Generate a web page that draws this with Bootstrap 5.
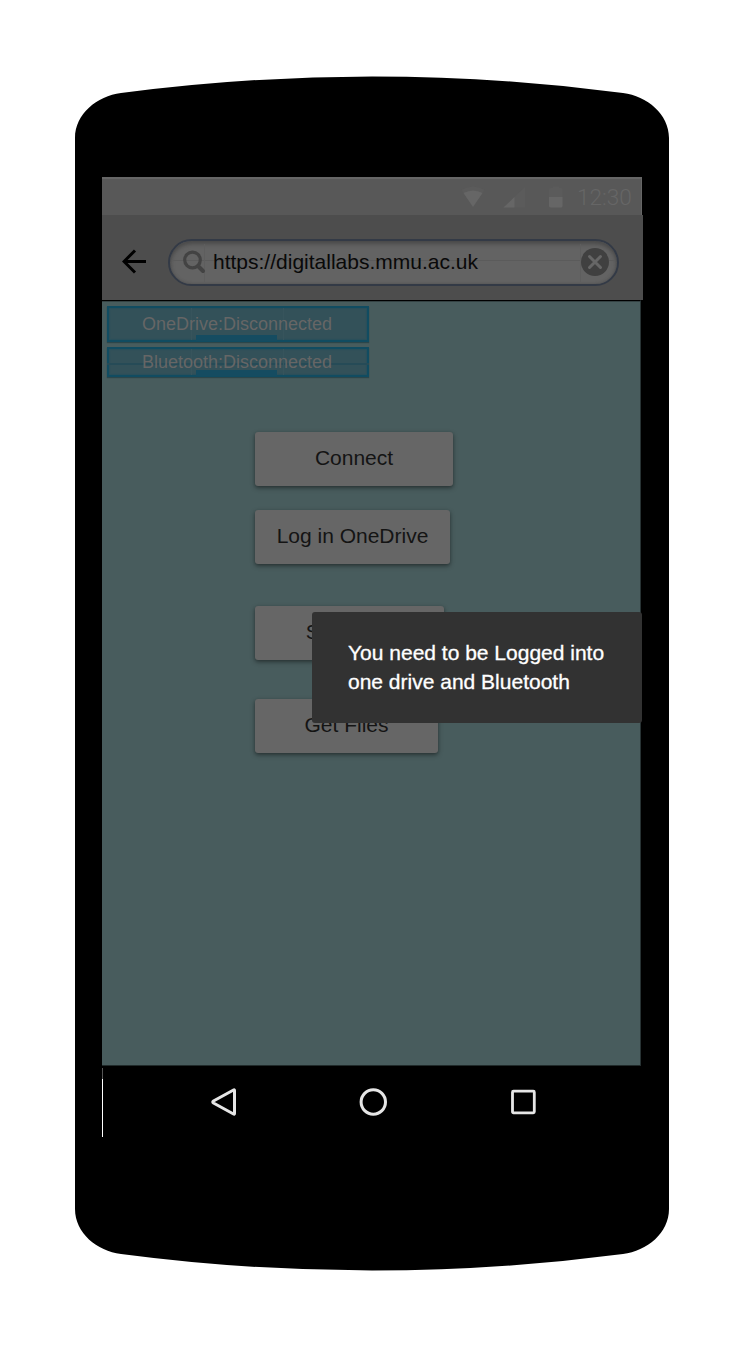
<!DOCTYPE html>
<html lang="en">
<head>
<meta charset="utf-8">
<meta name="viewport" content="width=device-width, initial-scale=1">
<title>Digital Labs</title>
<link href="https://cdn.jsdelivr.net/npm/bootstrap@5.3.0/dist/css/bootstrap.min.css" rel="stylesheet">
<style>
body{background:#fff;font-family:"Liberation Sans",Arial,sans-serif;overflow:hidden}
.phone{width:594px;height:1195px;margin:76px 0 0 75px;padding:101px 26px 0 27px}
.phone-shell{inset:0;z-index:-1}
.status-strip{width:540px;height:38px;background:#585858;border-top:2px solid #666;border-right:1px solid #666;padding-right:10px;color:#666}
.clock{font:300 22.6px/30px Roboto,sans-serif;width:54px;margin-left:11px;padding-top:4px}
.app-bar{width:541px;height:85px;background:#4d4d4d;padding:24px 24px 0 20px}
.back-arrow{margin:10px 21px 0 0}
.search{width:451px;height:47px;border:2px solid #333a46;border-radius:24px;background:#636363;box-shadow:inset 0 3px 4px #4a4a4a,inset 0 0 3px #505050;color:#090909;padding:0 8px 2px 12px}
.search-text{font-size:21px;line-height:41px;margin-left:7px}
.cross-v{top:3px;bottom:2px;width:1px;background:#5e5e5e}
.cross-h{left:2px;right:2px;top:19px;height:1px;background:#5b5b5b}
.page-area{width:539px;height:766px;background:#485c5d;border-top:1px solid #000;border-right:1px solid #283334;border-bottom:1px solid #202a2a;box-shadow:inset 0 1px #344243;padding:5px 0 0 5px}
.state-chip{width:262px;border:2px solid #114c61;background:#335159;color:#666;font-size:18px;box-shadow:0 1px 1px #2b464b,inset 0 0 2px #164f61;padding-right:2px}
.state-chip::after{content:"";position:absolute;left:87px;width:81px;bottom:-1px;height:6px;background:#154c61}
.chip-a{height:36px;line-height:33px}
.chip-b{height:30px;line-height:27px;margin-top:5px}
.seam-h{left:-2px;right:-2px;top:14px;height:2px;background:#264b57}
.seam-v{top:0;bottom:0;width:1px;background:#37545c}
.btn.action{height:54px;background:#666;color:#141414;font-size:21px;line-height:50px;border:0;border-radius:3px;padding:0 0 2px;box-shadow:0 2px 5px rgba(0,0,0,.38),0 1px 3px rgba(0,0,0,.16)}
.actions{margin:55px 0 0 148px}
.w-a{width:198px}.w-b{width:195px;margin-top:24px}.w-c{width:189px;margin-top:42px}.w-d{width:183px;margin-top:39px}
.notice{left:237px;top:536px;width:330px;height:111px;background:#323232;border-radius:3px;color:#fff;font-size:21px;line-height:29px;padding:26px 0 0 36px;-webkit-text-stroke:.3px #fff}
.nav-keys{height:71px;width:541px;padding-left:108px}
.nav-keys::before{content:"";position:absolute;left:0;top:2px;width:1px;height:69px;background:linear-gradient(#555 11px,#fff 11px)}
.nav-keys svg{margin-top:21px}
</style>
</head>
<body>
<main class="phone position-relative">
  <svg class="phone-shell position-absolute" width="594" height="1195" viewBox="0 0 594 1195"><path d="M0 62C0 38 22 20 46 17Q297 -16 548 17C572 20 594 38 594 62V1133C594 1157 572 1175 548 1178Q297 1211 46 1178C22 1175 0 1157 0 1133Z"/></svg>

  <header>
    <div class="status-strip d-flex justify-content-end align-items-start">
      <svg width="24" height="36" viewBox="0 0 24 36"><path d="M.500 11Q12 4 23.500 11L12 28Z" fill="#5b5b5b"/><path d="M2.500 14Q12 9 21.500 14L12 28Z" fill="#666"/></svg>
      <svg style="margin-left:17px" width="24" height="36" viewBox="0 0 24 36"><path d="M23 8V28.500H1.500Z" fill="#5b5b5b"/><path d="M12.500 18V28.500H1.500Z" fill="#666"/></svg>
      <svg style="margin-left:18px" width="22" height="36" viewBox="0 0 22 36"><path d="M7 9H9V7.500H15V9H17Q18.500 9 18.500 11V18H5V11Q5 9 7 9Z" fill="#5b5b5b"/><path d="M5 18H18.500V27Q18.500 28.500 17 28.500H7Q5 28.500 5 27Z" fill="#666"/></svg>
      <span class="clock">12:30</span>
    </div>
    <div class="app-bar d-flex align-items-start">
      <svg class="back-arrow flex-shrink-0" width="25" height="25" viewBox="0 0 25 25" fill="none" stroke="#000" stroke-width="3"><path d="M24 12.500H2M13 1.500L2 12.500L13 23.500"/></svg>
      <div class="search position-relative d-flex align-items-center flex-shrink-0">
        <i class="cross-h position-absolute"></i><i class="cross-v position-absolute" style="left:34px"></i><i class="cross-v position-absolute" style="left:410px"></i>
        <svg class="position-relative" width="24" height="24" viewBox="0 0 24 24" fill="none" stroke="#434343"><circle cx="10.500" cy="10" r="7.800" stroke-width="3.200"/><path d="M16 16L21 21" stroke-width="4" stroke-linecap="round"/></svg>
        <span class="search-text position-relative">https://digitallabs.mmu.ac.uk</span>
        <svg class="ms-auto position-relative" width="28" height="28" viewBox="0 0 28 28"><circle cx="14" cy="14" r="14" fill="#404040"/><path d="M8.500 8.500L19.500 19.500M19.500 8.500L8.500 19.500" stroke="#666" stroke-width="3" stroke-linecap="round"/></svg>
      </div>
    </div>
  </header>

  <section class="page-area">
    <div class="state-chip chip-a position-relative text-center"><i class="seam-v position-absolute" style="left:82px"></i><i class="seam-v position-absolute" style="left:174px"></i><span class="position-relative z-1">OneDrive:Disconnected</span></div>
    <div class="state-chip chip-b position-relative text-center"><i class="seam-h position-absolute"></i><i class="seam-v position-absolute" style="left:82px"></i><i class="seam-v position-absolute" style="left:174px"></i><span class="position-relative z-1">Bluetooth:Disconnected</span></div>
    <div class="actions d-flex flex-column align-items-start">
      <button class="btn action w-a">Connect</button>
      <button class="btn action w-b">Log in OneDrive</button>
      <button class="btn action w-c">Save File</button>
      <button class="btn action w-d">Get Files</button>
    </div>
  </section>

  <nav class="nav-keys position-relative d-flex align-items-start">
    <svg width="27" height="30" viewBox="0 0 27 30" fill="none" stroke="#e6e6e6" stroke-width="3"><path d="M24.500 3.500V26.500Q24.500 27.500 23.500 27L3.500 16Q2 15 3.500 14L23.500 3Q24.500 2.500 24.500 3.500Z"/></svg>
    <svg style="margin-left:122px" width="30" height="30" viewBox="0 0 30 30" fill="none" stroke="#e6e6e6" stroke-width="3"><circle cx="14.300" cy="15" r="12.200"/></svg>
    <svg style="margin-left:122px" width="26" height="30" viewBox="0 0 26 30" fill="none" stroke="#e6e6e6" stroke-width="2.800"><rect x="1.500" y="4.200" width="21.800" height="21.600" rx="1"/></svg>
  </nav>

  <div class="notice position-absolute" role="alert">You need to be Logged into<br>one drive and Bluetooth</div>
</main>
<script src="https://cdn.jsdelivr.net/npm/bootstrap@5.3.0/dist/js/bootstrap.bundle.min.js"></script>
</body>
</html>
